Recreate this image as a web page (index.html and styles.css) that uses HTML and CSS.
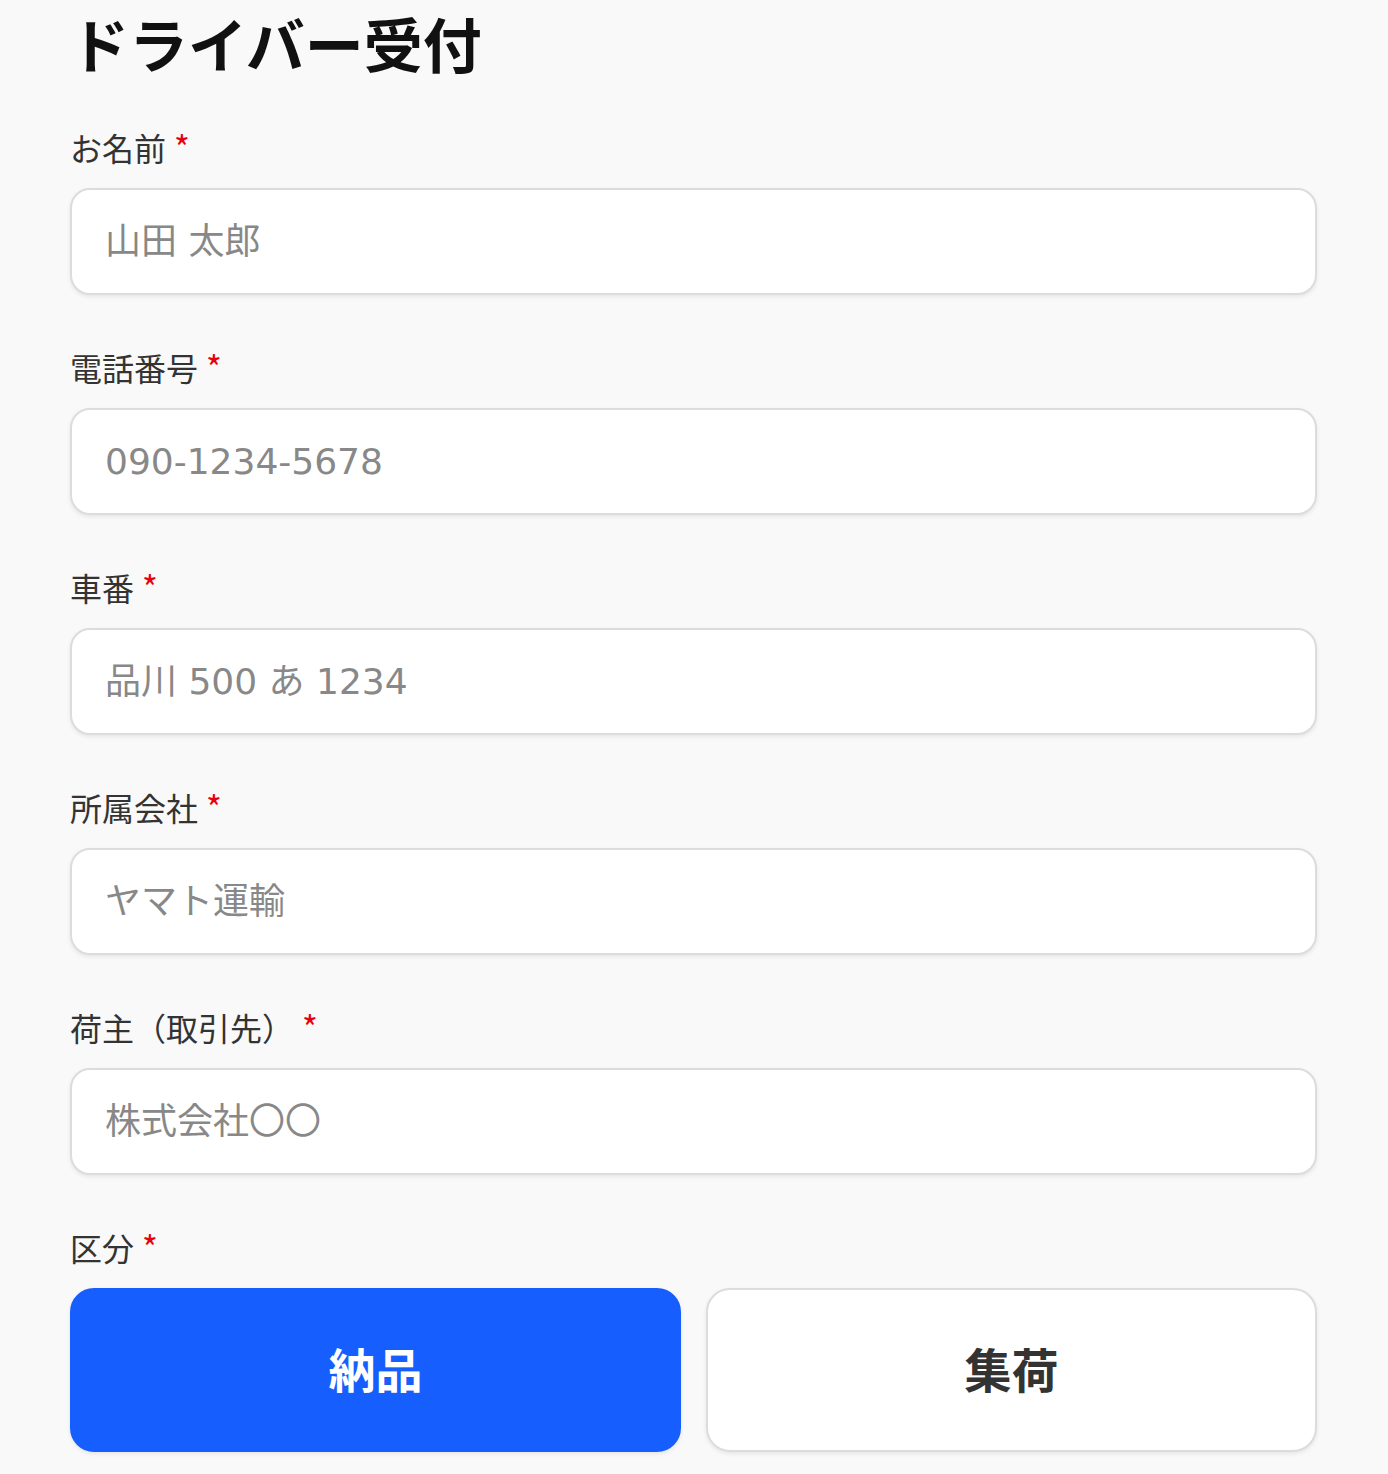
FILE: index.html
```
<!DOCTYPE html>
<html lang="ja">
<head>
    <meta charset="UTF-8">
    <meta name="viewport" content="width=device-width, initial-scale=1.0">
    <title>ドライバー受付</title>
    <link rel="stylesheet" href="styles.css">
</head>
<body>

    <div class="page">
        <h1>ドライバー受付</h1>
        <form id="receptionForm">
            <div class="field">
                <label for="name">お名前<span class="req">*</span></label>
                <input type="text" id="name" name="name" placeholder="山田 太郎">
            </div>

            <div class="field">
                <label for="tel">電話番号<span class="req">*</span></label>
                <input type="tel" id="tel" name="tel" placeholder="090-1234-5678">
            </div>

            <div class="field">
                <label for="car">車番<span class="req">*</span></label>
                <input type="text" id="car" name="car" placeholder="品川 500 あ 1234">
            </div>

            <div class="field">
                <label for="company">所属会社<span class="req">*</span></label>
                <input type="text" id="company" name="company" placeholder="ヤマト運輸">
            </div>

            <div class="field">
                <label for="shipper">荷主（取引先）<span class="req">*</span></label>
                <input type="text" id="shipper" name="shipper" placeholder="株式会社〇〇">
            </div>

            <div class="field">
                <label>区分<span class="req">*</span></label>
                <div class="kind">
                    <button type="button" class="kind-btn active">納品</button>
                    <button type="button" class="kind-btn">集荷</button>
                </div>
            </div>
        </form>
    </div>

</body>
</html>
```

FILE: styles.css
```
body {
    font-family: "Noto Sans CJK JP", "Noto Sans", sans-serif;
    background-color: #f9f9f9;
    color: #333;
    margin: 0;
}
.page {
    padding: 0 71px 0 70px;
}
h1 {
    font-size: 59px;
    font-weight: 700;
    line-height: 86px;
    margin: 0 0 39px 0;
    color: #111;
}
.field {
    margin-bottom: 50px;
}
label {
    display: block;
    font-size: 32px;
    line-height: 44px;
    margin-bottom: 19px;
    color: #333;
}
.req {
    color: #e60012;
    font-size: 34px;
    margin-left: 8px;
    line-height: 1;
    vertical-align: 0;
}
input {
    display: block;
    box-sizing: border-box;
    width: 100%;
    height: 107px;
    padding: 0 33px;
    font-family: "DejaVu Sans", "Noto Sans CJK JP", sans-serif;
    font-size: 36px;
    color: #333;
    background: #fff;
    border: 2px solid #dcdcdc;
    border-radius: 20px;
    box-shadow: 0 2px 4px rgba(0,0,0,0.08);
    outline: none;
}
input::placeholder {
    color: #888;
}
.kind {
    display: grid;
    grid-template-columns: 1fr 1fr;
    gap: 25px;
}
.kind-btn {
    height: 164px;
    padding-bottom: 6px;
    font-family: inherit;
    font-size: 47px;
    font-weight: 700;
    color: #333;
    background: #fff;
    border: 2px solid #dcdcdc;
    border-radius: 24px;
    box-shadow: 0 2px 4px rgba(0,0,0,0.08);
    cursor: pointer;
}
.kind-btn.active {
    background-color: #175efe;
    border-color: #175efe;
    color: #fff;
}
```
